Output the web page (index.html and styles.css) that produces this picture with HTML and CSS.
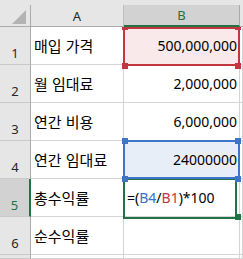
FILE: index.html
```html
<!DOCTYPE html>
<html lang="ko">
<head>
<meta charset="utf-8">
<title>Sheet</title>
<link rel="stylesheet" href="styles.css">
</head>
<body>
<div class="sheet">
  <div class="strip"></div>

  <div class="hd corner"><svg class="tri" width="30" height="21" viewBox="0 0 30 21"><polygon points="26,5 26,19 12,19" fill="#b3b3b3"/></svg></div>
  <div class="hd">A</div>
  <div class="hd sel">B</div>
  <div class="hd last"></div>

  <div class="rh">1</div>
  <div class="cell"><span class="txt">매입 가격</span></div>
  <div class="cell num pink">500,000,000</div>
  <div class="cell"></div>

  <div class="rh">2</div>
  <div class="cell"><span class="txt">월 임대료</span></div>
  <div class="cell num">2,000,000</div>
  <div class="cell"></div>

  <div class="rh">3</div>
  <div class="cell"><span class="txt">연간 비용</span></div>
  <div class="cell num">6,000,000</div>
  <div class="cell"></div>

  <div class="rh">4</div>
  <div class="cell"><span class="txt">연간 임대료</span></div>
  <div class="cell num blue">24000000</div>
  <div class="cell"></div>

  <div class="rh sel">5</div>
  <div class="cell"><span class="txt">총수익률</span></div>
  <div class="cell formula">=(<span class="ref-b">B4</span>/<span class="ref-r">B1</span>)*100</div>
  <div class="cell"></div>

  <div class="rh">6</div>
  <div class="cell"><span class="txt">순수익률</span></div>
  <div class="cell"></div>
  <div class="cell"></div>

  <div class="rh"></div>
  <div class="cell"></div>
  <div class="cell"></div>
  <div class="cell"></div>

  <div class="box red"></div>
  <div class="h red-h h-l h-t1"></div>
  <div class="h red-h h-r h-t1"></div>
  <div class="h red-h h-l h-b1"></div>
  <div class="h red-h h-r h-b1"></div>

  <div class="box grn"></div>
  <div class="h fill"></div>

  <div class="box blu"></div>
  <div class="h blu-h h-l h-t4"></div>
  <div class="h blu-h h-r h-t4"></div>
  <div class="h blu-h h-l h-b4"></div>
  <div class="h blu-h h-r h-b4"></div>
</div>
</body>
</html>
```
FILE: styles.css
```css
* { box-sizing: border-box; }
html, body { margin: 0; padding: 0; background: #fff; }

.sheet {
  position: relative;
  width: 243px;
  height: 259px;
  overflow: hidden;
  display: grid;
  grid-template-columns: 31px 93px 116px 1fr;
  grid-template-rows: 5px 22px repeat(6, 38px) 1fr;
  font-family: "Noto Sans", sans-serif;
  background: #fff;
}

.strip { grid-column: 1 / -1; background: #e6e6e6; }

.hd {
  position: relative;
  z-index: 3;
  background: #e6e6e6;
  border-right: 1px solid #bdbdbd;
  border-bottom: 1px solid #ababab;
  display: flex;
  align-items: center;
  justify-content: center;
  font-size: 13px;
  color: #262626;
}
.hd.corner { border-right-color: #ababab; }
.hd.sel {
  background: #d2d2d2;
  color: #217346;
  border-right-color: #ababab;
  border-bottom: 2px solid #217346;
}
.hd.last { border-right: none; }
.tri { display: block; position: absolute; left: 0; top: 0; }

.rh {
  background: #e6e6e6;
  border-right: 1px solid #ababab;
  border-bottom: 1px solid #c9c9c9;
  display: flex;
  align-items: flex-end;
  justify-content: center;
  padding-bottom: 3px;
  font-size: 13px;
  line-height: 16px;
  color: #262626;
}
.rh.sel {
  background: #d2d2d2;
  border-right: 2px solid #217346;
  color: #217346;
}

.cell {
  border-right: 1px solid #d4d4d4;
  border-bottom: 1px solid #d4d4d4;
  display: flex;
  align-items: center;
  color: #000;
  white-space: nowrap;
}
.txt {
  font-family: "Noto Sans CJK KR", sans-serif;
  font-size: 15px;
  padding-left: 3px;
}
.num {
  justify-content: flex-end;
  padding-right: 2px;
  font-size: 14px;
}
.pink { background: #f9e9ea; }
.blue { background: #e8eef8; }
.formula { padding-left: 3px; font-size: 14px; }
.ref-b { color: #3a70c6; }
.ref-r { color: #c8323c; }

.box {
  position: absolute;
  z-index: 1;
  border: 2px solid;
}
.box.red { left: 123px; top: 27px; width: 117px; height: 39px; border-color: #c4363f; }
.box.blu { left: 123px; top: 140px; width: 117px; height: 39px; border-color: #3f75c9; }
.box.grn { left: 123px; top: 178px; width: 114px; height: 41px; border-color: #217346; }

.h { position: absolute; width: 6px; height: 6px; z-index: 2; }
.red-h { background: #c4363f; }
.blu-h { background: #3f75c9; }
.h-l { left: 122px; }
.h-r { left: 235px; }
.h-t1 { top: 24px; }
.h-b1 { top: 63px; }
.h-t4 { top: 138px; }
.h-b4 { top: 176px; }
.fill { left: 235px; top: 214px; background: #217346; }
```
